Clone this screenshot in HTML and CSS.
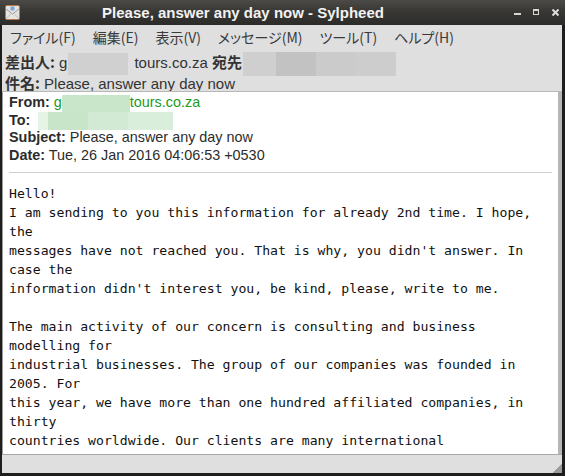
FILE: index.html
```html
<!DOCTYPE html>
<html lang="ja">
<head>
    <meta charset="UTF-8">
    <title>Please, answer any day now - Sylpheed</title>
    <link rel="stylesheet" href="styles.css">
</head>
<body>

<div class="window">
    <div class="titlebar">
        <svg class="app-icon" width="15" height="15" viewBox="0 0 15 15">
            <rect x="0.5" y="0.5" width="14" height="14" rx="1.5" fill="#e6e4e0" stroke="#b87a4a"/>
            <path d="M1 4 L7.5 9 L14 4" fill="none" stroke="#9a9a9a" stroke-width="1"/>
            <path d="M1 14 L6 8.5 M14 14 L9 8.5" fill="none" stroke="#bdbdbd" stroke-width="1"/>
            <rect x="5.5" y="1.5" width="4" height="4" fill="#7aa7d8"/>
        </svg>
        <div class="title">Please, answer any day now - Sylpheed</div>
        <div class="controls">
            <span class="ctl-min"></span>
            <span class="ctl-max"></span>
            <svg class="ctl-close" width="7" height="7" viewBox="0 0 7 7">
                <path d="M0.5 0.5 L6.5 6.5 M6.5 0.5 L0.5 6.5" stroke="#dcdcdc" stroke-width="2"/>
            </svg>
        </div>
    </div>

    <div class="client">
        <div class="menubar">
            <span>ファイル(F)</span>
            <span>編集(E)</span>
            <span>表示(V)</span>
            <span>メッセージ(M)</span>
            <span>ツール(T)</span>
            <span>ヘルプ(H)</span>
        </div>

        <div class="summary">
            <div><b>差出人:</b> g<span class="blur blur-a"></span>tours.co.za <b>宛先</b><span class="blur blur-b1"></span><span class="blur blur-b2"></span><span class="blur blur-b3"></span><span class="blur blur-b4"></span></div>
            <div><b>件名:</b> Please, answer any day now</div>
        </div>

        <div class="view">
            <div class="pane">
                <div class="headers">
                    <div><b>From:</b> <span class="link">g<span class="gblur gblur-a"></span>tours.co.za</span></div>
                    <div><b>To:</b> <span class="gblur gblur-b1"></span><span class="gblur gblur-b2"></span><span class="gblur gblur-b3"></span><span class="gblur gblur-b4"></span></div>
                    <div><b>Subject:</b> Please, answer any day now</div>
                    <div><b>Date:</b> Tue, 26 Jan 2016 04:06:53 +0530</div>
                </div>
                <hr class="sep">
<pre class="body">Hello!
I am sending to you this information for already 2nd time. I hope,
the
messages have not reached you. That is why, you didn't answer. In
case the
information didn't interest you, be kind, please, write to me.

The main activity of our concern is consulting and business
modelling for
industrial businesses. The group of our companies was founded in
2005. For
this year, we have more than one hundred affiliated companies, in
thirty
countries worldwide. Our clients are many international
organizations.</pre>
            </div>
            <div class="scrollbar"></div>
        </div>

        <div class="statusbar">
            <span class="grip"></span>
        </div>
    </div>
</div>

</body>
</html>
```

FILE: styles.css
```css
html, body {
    margin: 0;
    padding: 0;
}
body {
    width: 565px;
    height: 476px;
    overflow: hidden;
    background: #1e1e1d;
}
.window {
    display: flex;
    flex-direction: column;
    height: 476px;
}

/* title bar */
.titlebar {
    flex: none;
    height: 25px;
    display: flex;
    align-items: center;
    background: linear-gradient(#4c4b47, #3a3936 40%, #2b2b29);
}
.app-icon {
    margin-left: 5px;
    margin-top: -1px;
    flex: none;
}
.title {
    flex: 1;
    padding-right: 36px;
    text-align: center;
    color: #f2f2f2;
    font-family: "Liberation Sans", Arial, sans-serif;
    font-weight: bold;
    font-size: 15px;
}
.controls {
    width: 63px;
    position: relative;
    height: 25px;
}
.ctl-min {
    position: absolute;
    left: 12px;
    top: 13px;
    width: 7px;
    height: 2px;
    background: #d6d6d6;
}
.ctl-max {
    position: absolute;
    left: 31px;
    top: 9px;
    width: 4px;
    height: 3px;
    border: 1px solid #d6d6d6;
    border-top-width: 2px;
}
.ctl-close {
    position: absolute;
    left: 50px;
    top: 9px;
}

/* client area */
.client {
    flex: 1;
    min-height: 0;
    margin: 0 3px 3px 2px;
    background: #dfdfdf;
    display: flex;
    flex-direction: column;
    font-family: "Liberation Sans", "Noto Sans CJK JP", sans-serif;
    color: #2a2a2a;
}
.menubar {
    flex: none;
    height: 23px;
    display: flex;
    align-items: center;
    gap: 17px;
    padding-left: 8px;
    font-family: "Noto Sans CJK JP", sans-serif;
    font-feature-settings: "palt";
    font-size: 14px;
    color: #3a3a3a;
}
.summary {
    flex: none;
    height: 43px;
    box-sizing: border-box;
    padding: 4px 0 0 3px;
    font-size: 15px;
    line-height: 19px;
    color: #333;
}
.summary b {
    font-family: "Noto Sans CJK JP", sans-serif;
    font-size: 15px;
}
.blur {
    display: inline-block;
    vertical-align: middle;
    height: 22px;
    margin: -3px 0;
}
.blur-a { width: 60px; background: #d0d0d0; margin-left: 1px; margin-right: 6px; }
.blur-b1 { width: 33px; background: #cfcfcf; height: 24px; margin-left: 1px; }
.blur-b2 { width: 40px; background: #c2c2c2; height: 24px; }
.blur-b3 { width: 40px; background: #cbcbcb; height: 24px; }
.blur-b4 { width: 40px; background: #cdcdcd; height: 24px; }

/* message view */
.view {
    flex: 1;
    min-height: 0;
    display: flex;
    border-top: 1px solid #b8b8b8;
    border-bottom: 1px solid #a9a9a9;
}
.pane {
    flex: 1;
    background: #fff;
    border-left: 1px solid #9c9c9c;
    padding: 2px 6px 0 6px;
    overflow: hidden;
}
.headers {
    font-size: 14.4px;
    line-height: 17.7px;
    color: #2c2c2c;
}
.link {
    color: #1c9a1c;
}
.gblur {
    display: inline-block;
    vertical-align: middle;
    height: 17px;
    margin: -2px 0;
}
.gblur-a { width: 68px; background: #c9e6cb; }
.gblur-b1 { width: 10px; background: #e6f3e7; height: 18px; margin-left: 4px; }
.gblur-b2 { width: 40px; background: #c8e5ca; height: 18px; }
.gblur-b3 { width: 40px; background: #d2ead4; height: 18px; }
.gblur-b4 { width: 45px; background: #d9eedb; height: 18px; }
.sep {
    border: none;
    border-top: 1px solid #cfcfcf;
    margin: 7px 0 0 0;
}
.body {
    margin: 11px 0 0 0;
    font-family: "DejaVu Sans Mono", "Liberation Mono", monospace;
    font-size: 13.15px;
    line-height: 19px;
    color: #111;
}
.scrollbar {
    width: 4px;
    background: #b6b6b6;
}

/* status bar */
.statusbar {
    flex: none;
    height: 18px;
    position: relative;
}
.grip {
    position: absolute;
    right: 0;
    bottom: 0;
    width: 10px;
    height: 10px;
    background: linear-gradient(135deg, transparent 50%, #9c9c9c 50%);
}
```
